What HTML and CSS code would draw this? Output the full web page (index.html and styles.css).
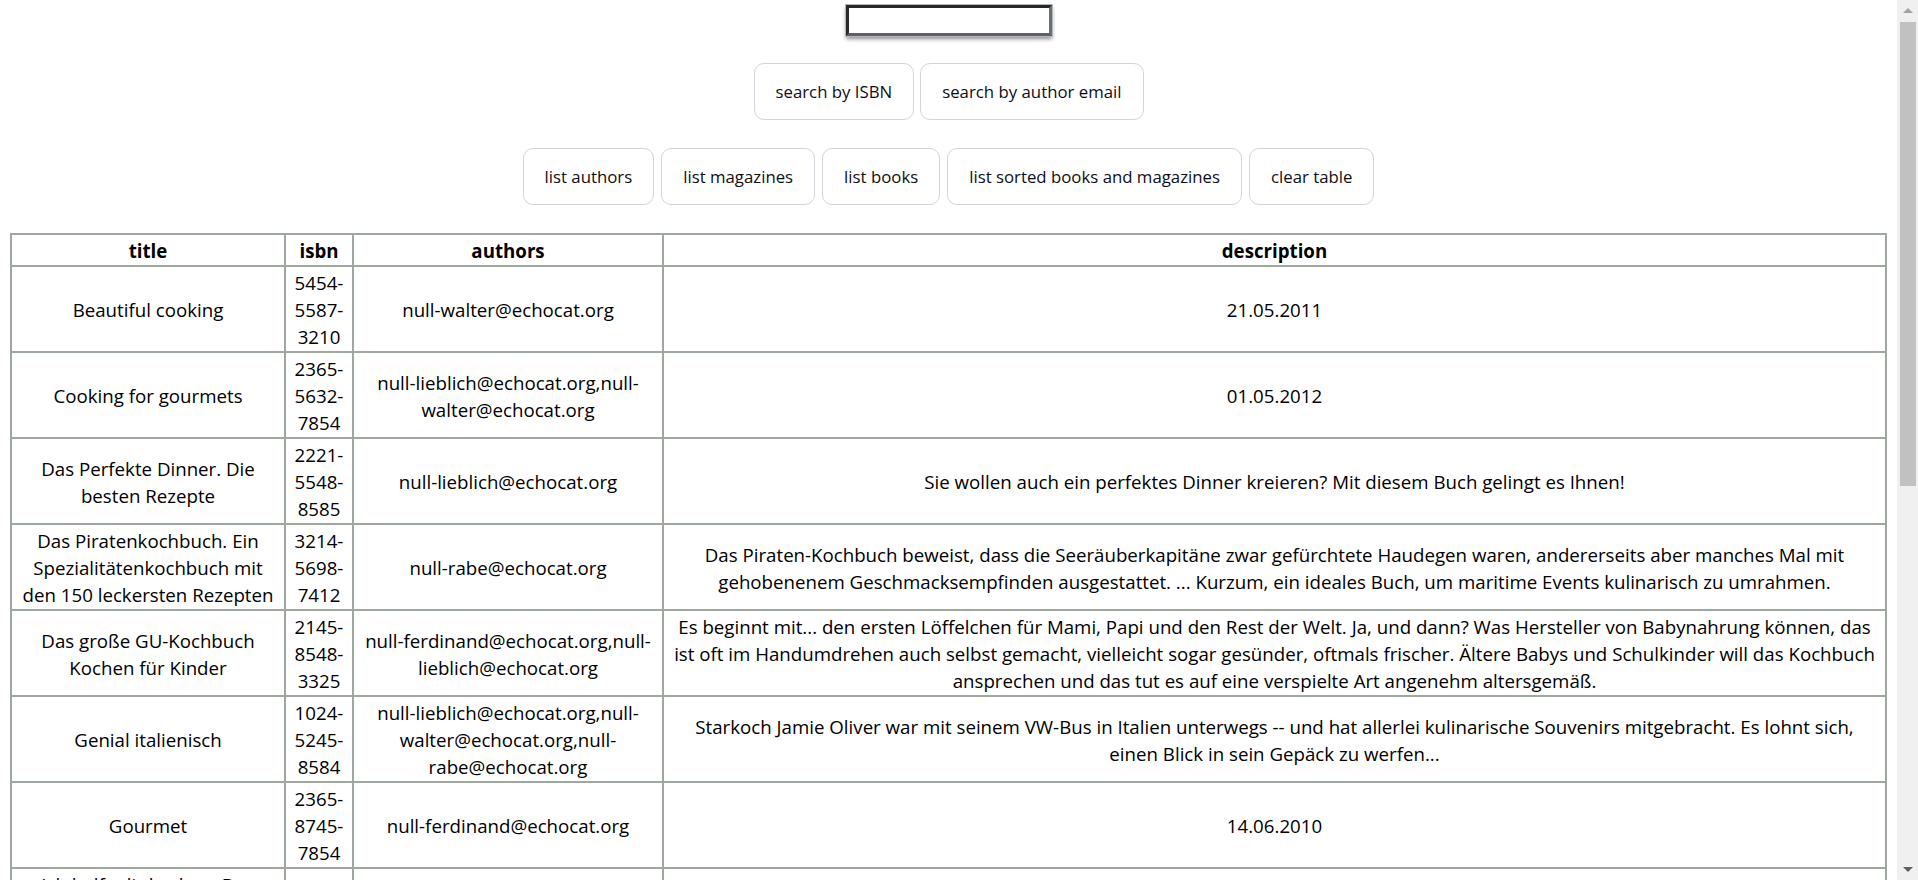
FILE: index.html
```html
<!DOCTYPE html>
<html lang="de">
<head>
<meta charset="utf-8">
<title>echocat library</title>
<link rel="stylesheet" href="styles.css">
</head>
<body>
<div class="controls">
  <div class="search-row"><input class="search-input" type="text"></div>
  <div class="btn-row btn-row-search">
    <button class="btn">search by ISBN</button>
    <button class="btn">search by author email</button>
  </div>
  <div class="btn-row btn-row-list">
    <button class="btn">list authors</button>
    <button class="btn">list magazines</button>
    <button class="btn">list books</button>
    <button class="btn">list sorted books and magazines</button>
    <button class="btn">clear table</button>
  </div>
</div>
<table class="results">
  <colgroup>
    <col class="col-title">
    <col class="col-isbn">
    <col class="col-authors">
    <col class="col-desc">
  </colgroup>
  <thead>
    <tr><th>title</th><th>isbn</th><th>authors</th><th>description</th></tr>
  </thead>
  <tbody>
    <tr><td>Beautiful cooking</td><td>5454-5587-3210</td><td>null-walter@echocat.org</td><td>21.05.2011</td></tr>
    <tr><td>Cooking for gourmets</td><td>2365-5632-7854</td><td>null-lieblich@echocat.org,null-walter@echocat.org</td><td>01.05.2012</td></tr>
    <tr><td>Das Perfekte Dinner. Die besten Rezepte</td><td>2221-5548-8585</td><td>null-lieblich@echocat.org</td><td>Sie wollen auch ein perfektes Dinner kreieren? Mit diesem Buch gelingt es Ihnen!</td></tr>
    <tr><td>Das Piratenkochbuch. Ein Spezialitätenkochbuch mit den&nbsp;150 leckersten Rezepten</td><td>3214-5698-7412</td><td>null-rabe@echocat.org</td><td>Das Piraten-Kochbuch beweist, dass die Seeräuberkapitäne zwar gefürchtete Haudegen waren, andererseits aber manches Mal mit gehobenenem Geschmacksempfinden ausgestattet. ... Kurzum, ein ideales Buch, um maritime Events kulinarisch zu umrahmen.</td></tr>
    <tr><td>Das große GU-Kochbuch Kochen für Kinder</td><td>2145-8548-3325</td><td>null-ferdinand@echocat.org,null-lieblich@echocat.org</td><td>Es beginnt mit... den ersten Löffelchen für Mami, Papi und den Rest der Welt. Ja, und dann? Was Hersteller von Babynahrung können, das ist&nbsp;oft im Handumdrehen auch selbst gemacht, vielleicht sogar gesünder, oftmals frischer. Ältere Babys und Schulkinder will das Kochbuch ansprechen und das tut es auf eine verspielte Art angenehm altersgemäß.</td></tr>
    <tr><td>Genial italienisch</td><td>1024-5245-8584</td><td>null-lieblich@echocat.org,null-walter@echocat.org,null-rabe@echocat.org</td><td>Starkoch Jamie Oliver war mit seinem VW-Bus in Italien unterwegs -- und hat allerlei kulinarische Souvenirs mitgebracht. Es lohnt sich, einen&nbsp;Blick in sein Gepäck zu werfen...</td></tr>
    <tr><td>Gourmet</td><td>2365-8745-7854</td><td>null-ferdinand@echocat.org</td><td>14.06.2010</td></tr>
    <tr><td>Ich helfe dir kochen. Das erfolgreiche Universalkochbuch mit großem Backteil</td><td>5554-5545-4518</td><td>null-walter@echocat.org</td><td>Auf der Suche nach einem Basiskochbuch steht man heutzutage vor einer Fülle von Alternativen. Es fällt schwer, daraus die für sich passende Variante zu finden. Mit Ich helfe dir kochen hat man ein gut strukturiertes Grundlagenwerk.</td></tr>
    <tr><td>Meine Familie und ich</td><td>4545-8541-2012</td><td>null-mueller@echocat.org</td><td>10.07.2011</td></tr>
    <tr><td>O'Reillys Kochbuch für Geeks</td><td>2221-5548-8585</td><td>null-walter@echocat.org,null-lieblich@echocat.org</td><td>Nicht nur für Geeks: Kochen ist wie Programmieren, nur mit leckereren Ergebnissen.</td></tr>
    <tr><td>Schlank im Schlaf</td><td>4545-8558-3232</td><td>null-lieblich@echocat.org</td><td>Schlank im Schlaf klingt wie ein schöner Traum, aber es ist wirklich möglich. Allerdings nicht nach einer Salamitaktik.</td></tr>
    <tr><td>Schuhbecks Kochschule. Kochen lernen mit Alfons Schuhbeck</td><td>1215-4545-5895</td><td>null-walter@echocat.org</td><td>Aller Anfang ist leicht! Zumindest, wenn man beim Kochenlernen einen Lehrer wie Alfons Schuhbeck an seiner Seite hat.</td></tr>
    <tr><td>Vinum</td><td>1313-4545-8875</td><td>null-lieblich@echocat.org</td><td>23.02.2012</td></tr>
  </tbody>
</table>
<div class="scrollbar" aria-hidden="true">
  <span class="scroll-arrow scroll-up"></span>
  <span class="scroll-track"><span class="scroll-thumb"></span></span>
  <span class="scroll-arrow scroll-down"></span>
</div>
</body>
</html>
```

FILE: styles.css
```css
html {
  background: #ffffff;
}

body {
  margin: 0 10px 10px;
  font-family: "Open Sans", "Noto Sans", "Liberation Sans", sans-serif;
  color: #000000;
}

.controls {
  width: 1877px;
  padding-top: 5px;
}

.search-row {
  display: flex;
  justify-content: center;
}

.search-input {
  box-sizing: border-box;
  width: 206px;
  height: 31px;
  margin: 0;
  padding: 0 4px;
  border-style: solid;
  border-width: 3px;
  border-color: #26282b #6b7075 #5d6166 #26282b;
  background: #ffffff;
  box-shadow: 0 0 0 1px #b4b8bc, 0 3px 4px rgba(0, 0, 0, 0.45);
  font-family: inherit;
  font-size: 16px;
  outline: none;
}

.btn-row {
  display: flex;
  justify-content: center;
}

.btn-row-search {
  margin-top: 27px;
  gap: 6px;
}

.btn-row-list {
  margin-top: 28px;
  gap: 7px;
}

.btn {
  box-sizing: border-box;
  height: 57px;
  padding: 0 21px;
  border: 1px solid #d3d3dc;
  border-radius: 10px;
  background: #ffffff;
  color: #0e0e14;
  font-family: "Open Sans", "Noto Sans", "Liberation Sans", sans-serif;
  font-size: 16.8px;
  line-height: 24px;
  cursor: pointer;
}

.results {
  margin-top: 28px;
  width: 1877px;
  table-layout: fixed;
  border-collapse: collapse;
  border: 2px solid #9ea89e;
  font-size: 18.7px;
  line-height: 27px;
}

.col-title {
  width: 274px;
}

.col-isbn {
  width: 68px;
}

.col-authors {
  width: 310px;
}

.results th,
.results td {
  border: 2px solid #9ea89e;
  padding: 2px 1px 1px;
  text-align: center;
  vertical-align: middle;
}

.results th {
  font-weight: 700;
}

/* browser scrollbar of the reference, drawn over the page edge */
.scrollbar {
  position: fixed;
  top: 0;
  right: 0;
  width: 21px;
  height: 100vh;
  display: flex;
  flex-direction: column;
  background: #f0f0f0;
}

.scroll-arrow {
  height: 21px;
  flex: none;
  display: flex;
  align-items: center;
  justify-content: center;
}

.scroll-arrow::before {
  content: "";
  width: 0;
  height: 0;
  border-left: 5px solid transparent;
  border-right: 5px solid transparent;
}

.scroll-up::before {
  border-bottom: 5px solid #a3a3a3;
}

.scroll-down::before {
  border-top: 5px solid #606060;
}

.scroll-track {
  flex: 1;
  padding: 1px 2px 0 3px;
}

.scroll-thumb {
  display: block;
  height: 464px;
  background: #c1c1c1;
}
```
